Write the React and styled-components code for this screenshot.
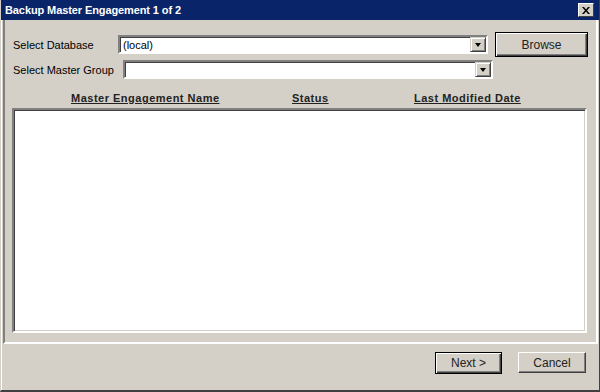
import React from 'react';
import styled, { createGlobalStyle } from 'styled-components';

const GlobalStyle = createGlobalStyle`
  html, body {
    margin: 0;
    padding: 0;
    background: #d4d0c8;
  }
  body {
    font-family: "Liberation Sans", Arial, sans-serif;
    font-size: 11px;
    color: #000;
  }
`;

const Window = styled.div`
  box-sizing: border-box;
  width: 600px;
  height: 392px;
  display: flex;
  flex-direction: column;
  background: #d4d0c8;
  border-left: 1px solid #d4d0c8;
  border-right: 1px solid #404040;
  border-bottom: 2px solid #404040;
  padding: 0 1px 0 2px;
  box-shadow: inset 1px 0 0 #fff;
`;

const TitleBar = styled.div`
  height: 20px;
  margin: 0 -1px 0 -2px;
  background: #0a246a;
  display: flex;
  align-items: center;
  padding: 0 4px;
  color: #fff;
  font-weight: bold;
  font-size: 11px;
  letter-spacing: -0.1px;
`;

const Title = styled.span`
  flex: 1;
`;

const CloseButton = styled.div`
  box-sizing: border-box;
  width: 16px;
  height: 14px;
  background: #d4d0c8;
  border: 1px solid;
  border-color: #fff #404040 #404040 #fff;
  display: flex;
  align-items: center;
  justify-content: center;
  margin-right: 1px;
`;

const Panel = styled.div`
  flex: 1;
  display: flex;
  flex-direction: column;
  border: 2px solid;
  border-color: #808080 #fff #fff #808080;
  border-top: none;
  padding: 0 0 0 8px;
`;

const Row = styled.div`
  display: flex;
  align-items: center;
  gap: ${p => p.$gap || 0}px;
  margin-top: ${p => p.$top}px;
`;

const Label = styled.div`
  width: ${p => p.$w}px;
  flex: none;
`;

const Combo = styled.div`
  box-sizing: border-box;
  width: 370px;
  height: 19px;
  background: #fff;
  border: 2px solid;
  border-color: #808080 #fff #fff #808080;
  box-shadow: inset 1px 1px 0 #404040;
  display: flex;
  align-items: center;
  padding-left: 3px;
`;

const ComboValue = styled.span`
  flex: 1;
`;

const ArrowButton = styled.div`
  box-sizing: border-box;
  width: 16px;
  height: 15px;
  background: #d4d0c8;
  border: 1px solid;
  border-color: #d4d0c8 #404040 #404040 #d4d0c8;
  box-shadow: inset 1px 1px 0 #fff, inset -1px -1px 0 #808080;
  display: flex;
  align-items: center;
  justify-content: center;
`;

const Arrow = styled.div`
  width: 0;
  height: 0;
  border-left: 3.5px solid transparent;
  border-right: 3.5px solid transparent;
  border-top: 4px solid #000;
`;

const Button = styled.div`
  box-sizing: border-box;
  width: ${p => p.$w}px;
  height: ${p => p.$h}px;
  background: #d4d0c8;
  border: 1px solid;
  border-color: ${p => (p.$default ? '#000' : '#fff #404040 #404040 #fff')};
  box-shadow: ${p =>
    p.$default
      ? 'inset 1px 1px 0 #fff, inset -1px -1px 0 #404040, inset -2px -2px 0 #808080'
      : 'inset -1px -1px 0 #808080'};
  display: flex;
  align-items: center;
  justify-content: center;
  font-size: 12px;
  color: #222;
`;

const Headers = styled.div`
  display: grid;
  grid-template-columns: 221px 122px 1fr;
  padding-left: 58px;
  margin-top: 12px;
  height: 14px;
  align-items: center;
`;

const HeaderCell = styled.div`
  font-weight: bold;
  text-decoration: underline;
  letter-spacing: 0.5px;
  color: #222;
`;

const ListBox = styled.div`
  box-sizing: border-box;
  margin: 3px 9px 9px -1px;
  flex: 1;
  background: #fff;
  border: 2px solid;
  border-color: #808080 #fff #fff #808080;
  box-shadow: inset 1px 1px 0 #404040, inset -1px -1px 0 #d4d0c8;
`;

const Footer = styled.div`
  height: 38px;
  display: flex;
  justify-content: flex-end;
  align-items: flex-start;
  gap: 16px;
  padding: 8px 12px 0 0;
`;

export default function App() {
  return (
    <>
      <GlobalStyle />
      <Window>
        <TitleBar>
          <Title>Backup Master Engagement 1 of 2</Title>
          <CloseButton>
            <svg width="8" height="7" viewBox="0 0 8 7">
              <path d="M0 0h2l2 2.5L6 0h2L5 3.5 8 7H6L4 4.5 2 7H0l3-3.5z" fill="#000" />
            </svg>
          </CloseButton>
        </TitleBar>
        <Panel>
          <Row $top={12} $gap={7}>
            <Label $w={98}>Select Database</Label>
            <Combo>
              <ComboValue>(local)</ComboValue>
              <ArrowButton><Arrow /></ArrowButton>
            </Combo>
            <Button $w={93} $h={25} $default>Browse</Button>
          </Row>
          <Row $top={3}>
            <Label $w={110}>Select Master Group</Label>
            <Combo>
              <ComboValue />
              <ArrowButton><Arrow /></ArrowButton>
            </Combo>
          </Row>
          <Headers>
            <HeaderCell>Master Engagement Name</HeaderCell>
            <HeaderCell>Status</HeaderCell>
            <HeaderCell>Last Modified Date</HeaderCell>
          </Headers>
          <ListBox />
        </Panel>
        <Footer>
          <Button $w={67} $h={22} $default>Next &gt;</Button>
          <Button $w={68} $h={21}>Cancel</Button>
        </Footer>
      </Window>
    </>
  );
}
